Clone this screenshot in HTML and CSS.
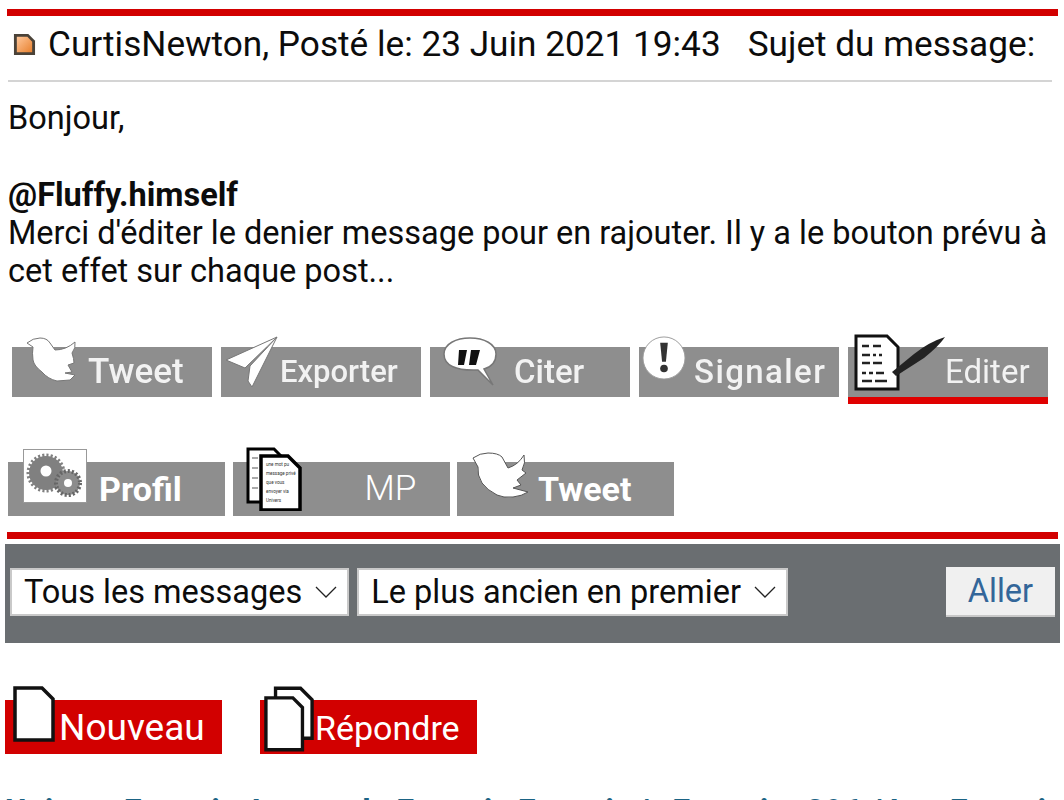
FILE: index.html
```html
<!DOCTYPE html>
<html lang="fr">
<head>
  <meta charset="UTF-8" />
  <title>Sujet du message</title>
  <link rel="stylesheet" href="styles.css">
</head>
<body>
  <div class="post">
    <div class="red-rule"></div>
    <div class="post-head">
      <svg class="post-icon" viewBox="0 0 24 24">
        <defs>
          <linearGradient id="docfill" x1="0" y1="0" x2="1" y2="1">
            <stop offset="0" stop-color="#ffc79a"/>
            <stop offset="1" stop-color="#e8812f"/>
          </linearGradient>
        </defs>
        <path d="M1 1h15l7 7v15H1z" fill="#4a4238"/>
        <path d="M4 4h11l5 5v11H4z" fill="url(#docfill)"/>
      </svg>
      <span>CurtisNewton, Posté le: 23 Juin 2021 19:43</span>
      <span class="subject">Sujet du message:</span>
    </div>
    <div class="post-body">
      <p>Bonjour,</p>
      <p>&nbsp;</p>
      <p><b>@Fluffy.himself</b></p>
      <p>Merci d'éditer le denier message pour en rajouter. Il y a le bouton prévu à cet effet sur chaque post...</p>
    </div>

    <!-- boutons du message -->
    <div class="post-actions">
      <a class="act">
        <svg class="ico ico-bird" viewBox="0 0 52 46"><path d="M1 7Q7 2 14 2q7 0 10 5l5 7Q40 14 49 6q1 6-3 11 2 6 2 10l-6 2 4 7-7 1 10 2-5 5-13 1Q22 43 16 36 8 30 7 24 6 17 7 11z" fill="#fff" stroke="#777" stroke-width="1"/></svg>
        <span class="act-label tweet-label">Tweet</span>
      </a>
      <a class="act">
        <svg class="ico ico-plane" viewBox="0 0 54 54"><path d="M52 2L1 25l19 8z" fill="#fff" stroke="#777"/><path d="M52 2L25 31l-2 15 4 6z" fill="#fff" stroke="#777"/></svg>
        <span class="act-label export-label">Exporter</span>
      </a>
      <a class="act">
        <svg class="ico ico-quote" viewBox="0 0 54 50"><path d="M27 1c14 0 26 6 26 16 0 8-5 13-12 15l9 16-15-15C12 34 1 28 1 17 1 7 13 1 27 1z" fill="#fff" stroke="#777" stroke-width="1.5"/><path d="M16 13h8l-3 15h-6zM28 13h9l-4 15h-7z" fill="#111"/></svg>
        <span class="act-label citer-label">Citer</span>
      </a>
      <a class="act">
        <svg class="ico ico-warn" viewBox="0 0 46 46"><circle cx="23" cy="23" r="22" fill="#fff" stroke="#999"/><path d="M19 7h8l-2 20h-4z" fill="#333"/><circle cx="23" cy="34" r="4" fill="#333"/></svg>
        <span class="act-label signal-label">Signaler</span>
      </a>
      <a class="act act-edit">
        <svg class="ico ico-edit" viewBox="0 0 94 58"><path d="M2 2h31l11 11v42H2z" fill="#fff" stroke="#111" stroke-width="3"/><path d="M8 12h7M19 12h8M8 21h8M19 21h3M25 21h3M8 29h8M19 29h9M8 39h4M15 39h4M22 39h8M8 47h10M21 47h12" stroke="#222" stroke-width="2.4"/><path d="M38 38L60 20Q75 8 91 3 85 12 70 24L42 42z" fill="#222"/></svg>
        <span class="act-label edit-label">Editer</span>
      </a>
    </div>

    <!-- boutons du profil -->
    <div class="user-actions">
      <a class="usr">
        <svg class="ico ico-gear" viewBox="0 0 64 54"><rect x="0.5" y="0.5" width="63" height="53" fill="#fff" stroke="#999"/><circle cx="23" cy="24" r="17" fill="#808080" stroke="#808080" stroke-width="5" stroke-dasharray="2 2"/><circle cx="45" cy="34" r="12" fill="#8c8c8c" stroke="#666" stroke-width="4" stroke-dasharray="2 2"/><circle cx="23" cy="22" r="5.5" fill="#fff"/><circle cx="45" cy="34" r="4" fill="#fff"/></svg>
        <span class="usr-label profil-label">Profil</span>
      </a>
      <a class="usr">
        <svg class="ico ico-pages" viewBox="0 0 56 64">
          <path d="M2 2h26l9 9v44H2z" fill="#fff" stroke="#000" stroke-width="3"/>
          <path d="M15 9h27l12 12v42H15z" fill="#fff" stroke="#000" stroke-width="3.5"/>
          <path d="M6 11h6M6 21h6M6 31h6M6 41h6" stroke="#555" stroke-width="1.2"/>
          <g class="page-text">
            <text x="20" y="19">une mot pu</text>
            <text x="20" y="28">message privé</text>
            <text x="20" y="37">que vous</text>
            <text x="20" y="46">envoyer via</text>
            <text x="20" y="55">Univers</text>
          </g>
        </svg>
        <span class="usr-label mp-label">MP</span>
      </a>
      <a class="usr">
        <svg class="ico ico-bird2" viewBox="0 0 57 48"><path d="M1 7Q8 2 16 2q10 0 14 4l6 11Q46 14 52 4q2 8-2 15l4 3-9 7 4 5-8 3 15 4q-6 4-15 5-10 1-16-2Q15 39 10 32 5 24 6 16z" fill="#fff" stroke="#555" stroke-width="1"/></svg>
        <span class="usr-label tweet2-label">Tweet</span>
      </a>
    </div>
    <div class="red-rule rule-end"></div>
  </div>

  <form class="sort-bar">
    <div class="fake-select">Tous les messages <svg viewBox="0 0 24 12"><path d="M2 1l10 10L22 1" fill="none" stroke="#222" stroke-width="1.3"/></svg></div>
    <div class="fake-select">Le plus ancien en premier <svg viewBox="0 0 24 12"><path d="M2 1l10 10L22 1" fill="none" stroke="#222" stroke-width="1.3"/></svg></div>
    <button class="go-btn" type="button">Aller</button>
  </form>

  <div class="topic-actions">
    <a class="red-btn">
      <svg class="ico ico-new" viewBox="0 0 42 56"><path d="M2 2h27l11 11v41H2z" fill="#fff" stroke="#111" stroke-width="3.5"/></svg>
      <span class="new-label">Nouveau</span>
    </a>
    <a class="red-btn">
      <svg class="ico ico-reply" viewBox="0 0 52 68"><path d="M12 2h26l12 12v40H12z" fill="#fff" stroke="#111" stroke-width="3.5"/><path d="M2 12h28l10 10v44H2z" fill="#fff" stroke="#111" stroke-width="3.5"/></svg>
      <span class="reply-label">Répondre</span>
    </a>
  </div>

  <div class="crumbs">Univers Ferrari : Autour de Ferrari : Ferrari <span class="sep-wide">/</span> Ferrari <span class="sep-mid">:</span> 296 / Les Ferrari</div>
</body>
</html>
```

FILE: styles.css
```css
html, body {
  height: 800px;
  overflow: hidden;
}

body {
  margin: 0;
  padding-top: 9px;
  background: #fff;
  font-family: Roboto, 'Liberation Sans', sans-serif;
  font-size: 32.5px;
  line-height: 38.3px;
  color: #0c0c0c;
}

a {
  display: block;
}

.post {
  width: 1051px;
  margin-left: 7px;
}

.red-rule {
  height: 7px;
  background: #d20000;
}

.rule-end {
  margin-top: 16px;
}

.post-head {
  display: flex;
  align-items: center;
  height: 66px;
  margin: 0 6px 0 1px;
  padding: 0 0 8px 5px;
  border-bottom: 2px solid #d4d4d4;
  box-sizing: border-box;
  font-size: 35.2px;
  white-space: nowrap;
}

.post-icon {
  width: 23px;
  height: 23px;
  margin-right: 12px;
}

.subject {
  margin-left: 27px;
}

.post-body {
  margin: 17px 0 0 1px;
}

.post-body p {
  margin: 0;
}

.post-actions {
  display: flex;
  gap: 9px;
  margin: 57px 0 0 5px;
  height: 57px;
}

.act {
  position: relative;
  width: 200px;
  height: 50px;
  background: #8e8e8e;
  color: #f2f2f2;
  font-size: 33px;
}

.act-edit {
  border-bottom: 7px solid #e00000;
}

.act-label {
  position: absolute;
  top: 6px;
  white-space: nowrap;
  filter: blur(0.4px);
}

.tweet-label { left: 76px; font-size: 35px; font-weight: 500; }
.export-label { left: 59px; font-size: 31px; font-weight: 500; }
.citer-label { left: 84px; font-weight: 500; }
.signal-label { left: 55px; letter-spacing: 1.4px; font-weight: 500; }
.edit-label { left: 97px; }

.ico {
  position: absolute;
  display: block;
}

.ico-bird { left: 14px; top: -11px; width: 52px; height: 46px; }
.ico-plane { left: 4px; top: -12px; width: 54px; height: 54px; }
.ico-quote { left: 13px; top: -10px; width: 54px; height: 50px; }
.ico-warn { left: 3px; top: -12px; width: 44px; height: 46px; }
.ico-edit { left: 6px; top: -13px; width: 94px; height: 58px; }

.user-actions {
  display: flex;
  gap: 7.5px;
  margin: 58px 0 0 1px;
}

.usr {
  position: relative;
  width: 217px;
  height: 54px;
  background: #8e8e8e;
  color: #fff;
  font-size: 34px;
}

.usr-label {
  position: absolute;
  top: 8px;
}

.profil-label { left: 91px; font-weight: 700; }
.mp-label { left: 132px; font-size: 35px; font-weight: 300; }
.tweet2-label { left: 81px; font-weight: 700; }

.ico-gear { left: 15px; top: -13px; width: 64px; height: 54px; }
.ico-pages { left: 13px; top: -15px; width: 56px; height: 64px; }
.ico-bird2 { left: 15px; top: -11px; width: 57px; height: 48px; }

.page-text {
  font-family: Roboto, sans-serif;
  font-size: 4.6px;
  fill: #333;
}

.sort-bar {
  display: flex;
  align-items: center;
  gap: 8px;
  width: 1055px;
  height: 99px;
  margin: 5px 0 0 5px;
  padding: 0 5px 3px;
  box-sizing: border-box;
  background: #6a6e71;
}

.fake-select {
  display: flex;
  align-items: center;
  justify-content: space-between;
  gap: 12px;
  height: 48px;
  padding: 0 9px 0 12px;
  box-sizing: border-box;
  background: #fff;
  border: 2px solid #c9c9c9;
  white-space: nowrap;
}

.fake-select svg {
  width: 24px;
  height: 12px;
}

.go-btn {
  margin-left: auto;
  width: 109px;
  height: 50px;
  border: none;
  border-bottom: 2px solid #c8c8c8;
  background: #f0f0f0;
  color: #336699;
  font: inherit;
}

.topic-actions {
  display: flex;
  gap: 38px;
  margin: 57px 0 0 5px;
}

.red-btn {
  position: relative;
  width: 217px;
  height: 54px;
  background: #d20000;
  color: #fff;
}

.new-label {
  position: absolute;
  left: 54px;
  top: 9px;
  font-size: 37px;
}

.reply-label {
  position: absolute;
  left: 55px;
  top: 9px;
  font-size: 34px;
}

.ico-new { left: 8px; top: -14px; width: 42px; height: 56px; }
.ico-reply { left: 4px; top: -14px; width: 50px; height: 66px; }

.crumbs {
  margin: 39px 0 0 5px;
  color: #1b6384;
  font-weight: 700;
  white-space: nowrap;
}

.sep-wide {
  margin: 0 15px;
}

.sep-mid {
  margin: 0 6px;
}
```
